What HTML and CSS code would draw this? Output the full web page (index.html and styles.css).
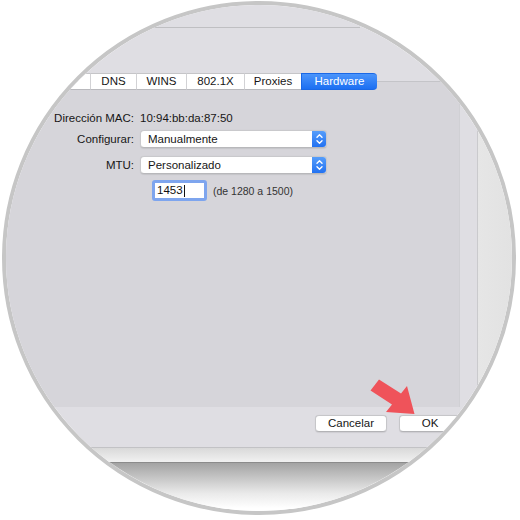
FILE: index.html
```html
<!DOCTYPE html>
<html lang="es">
<head>
<meta charset="utf-8">
<title>Hardware</title>
<link rel="stylesheet" href="styles.css">
</head>
<body>
<div class="lens">
  <div class="desk">
    <div class="window">
      <div class="toolbar"></div>
      <div class="panel">
        <div class="tabs">
          <span class="tab tab-tcp">TCP/IP</span>
          <span class="tab tab-dns">DNS</span>
          <span class="tab tab-wins">WINS</span>
          <span class="tab tab-8021x">802.1X</span>
          <span class="tab tab-proxies">Proxies</span>
          <span class="tab tab-hardware is-active">Hardware</span>
        </div>
        <div class="form">
          <div class="row row-mac">
            <span class="label">Dirección MAC:</span>
            <span class="value">10:94:bb:da:87:50</span>
          </div>
          <div class="row row-config">
            <span class="label">Configurar:</span>
            <div class="popup">
              <span class="popup-text">Manualmente</span>
              <span class="stepper"><svg viewBox="0 0 15 18" width="15" height="18"><path d="M5 7.2 L7.5 4.8 L10 7.2 M5 10.8 L7.5 13.2 L10 10.8" fill="none" stroke="#fff" stroke-width="1.4" stroke-linecap="round" stroke-linejoin="round"/></svg></span>
            </div>
          </div>
          <div class="row row-mtu">
            <span class="label">MTU:</span>
            <div class="popup">
              <span class="popup-text">Personalizado</span>
              <span class="stepper"><svg viewBox="0 0 15 18" width="15" height="18"><path d="M5 7.2 L7.5 4.8 L10 7.2 M5 10.8 L7.5 13.2 L10 10.8" fill="none" stroke="#fff" stroke-width="1.4" stroke-linecap="round" stroke-linejoin="round"/></svg></span>
            </div>
          </div>
          <div class="row row-custom">
            <span class="label"></span>
            <div class="field">
              <div class="input">1453<span class="caret"></span></div>
              <span class="hint">(de 1280 a 1500)</span>
            </div>
          </div>
        </div>
      </div>
      <div class="footer">
        <button class="btn btn-cancel">Cancelar</button>
        <button class="btn btn-ok">OK</button>
      </div>
    </div>
    <div class="desk-side"></div>
  </div>
  <div class="shelf"></div>
  <div class="floor"></div>
  <svg class="arrow" viewBox="0 0 520 520" width="520" height="520">
    <polygon points="379,379.5 401,393.5 407,386 414.5,414 386,412 392,404.5 370.5,390.5" fill="#ef535a"/>
  </svg>
</div>
</body>
</html>
```
FILE: styles.css
```css
* { box-sizing: border-box; }
html, body { margin: 0; padding: 0; background: #ffffff; }
body {
  width: 520px;
  height: 520px;
  overflow: hidden;
  font-family: "Liberation Sans", Arial, sans-serif;
  font-size: 11.5px;
  color: #161616;
}

.lens {
  position: relative;
  width: 514px;
  height: 514px;
  margin: 1px 0 0 2px;
  border: 4px solid #c6c6c6;
  border-radius: 50%;
  overflow: hidden;
  background: #ffffff;
  display: flex;
  flex-direction: column;
}

.desk {
  display: flex;
  flex: none;
  height: 443px;
}

.window {
  flex: none;
  width: 472px;
  height: 443px;
  background: #dfdee3;
  border-right: 1px solid #cacacd;
  border-bottom: 1px solid #c2c2c5;
  display: flex;
  flex-direction: column;
}

.desk-side {
  flex: 1;
  background: linear-gradient(90deg, #e6e6e6, #e2e2e2);
}

.toolbar {
  flex: none;
  width: 354px;
  height: 23px;
  border-bottom: 1px solid #bfbfc2;
}

.panel {
  flex: none;
  margin-top: 53px;
  width: 454px;
  height: 326px;
  background: #d6d5da;
  border-top: 1px solid #c4c4c8;
  border-right: 1px solid #d0d0d4;
}

.tabs {
  display: flex;
  justify-content: flex-end;
  margin-top: -9px;
  padding-right: 82px;
  height: 17px;
}

.tab {
  height: 17px;
  line-height: 15px;
  text-align: center;
  background: #ffffff;
  border-top: 1px solid #c5c5c8;
  border-bottom: 1px solid #b9b9bd;
  border-left: 1px solid #d2d2d5;
  color: #161616;
  white-space: nowrap;
}
.tab-tcp { width: 60px; padding-right: 26px; text-align: right; border-left: 0; }
.tab-dns { width: 46px; }
.tab-wins { width: 50px; }
.tab-8021x { width: 58px; }
.tab-proxies { width: 57px; }
.tab-hardware { width: 76px; }
.tab.is-active {
  background: linear-gradient(#4b95fb, #1c6ff2);
  border-color: #1a68e6;
  color: #ffffff;
  border-radius: 0 4px 4px 0;
}

.form {
  display: flex;
  flex-direction: column;
  padding-top: 19px;
}

.row {
  display: grid;
  grid-template-columns: 128px auto;
  column-gap: 6px;
  align-items: center;
  height: 18px;
}
.row-config { margin-top: 3px; }
.row-mtu { margin-top: 8px; }
.row-custom { margin-top: 6px; height: 21px; }

.label { text-align: right; white-space: nowrap; }
.value { white-space: nowrap; }

.popup {
  display: flex;
  align-items: center;
  width: 187px;
  height: 18px;
  background: #ffffff;
  border: 1px solid #c9c9cc;
  border-bottom-color: #b8b8bb;
  border-radius: 4px;
  box-shadow: 0 0.5px 1px rgba(0, 0, 0, 0.08);
  overflow: hidden;
}
.popup-text { flex: 1; padding-left: 7px; white-space: nowrap; }
.stepper {
  flex: none;
  width: 15px;
  height: 18px;
  margin: -1px -1px -1px 0;
  background: linear-gradient(#59a0fb, #1f6ff1);
  border-radius: 0 4px 4px 0;
  display: flex;
}

.field {
  display: flex;
  align-items: center;
  gap: 6px;
  padding-left: 12px;
}
.input {
  width: 55px;
  height: 21px;
  border: 3px solid #7ea5ee;
  border-radius: 3px;
  background: #ffffff;
  padding-left: 2px;
  line-height: 15px;
  font-size: 11.5px;
  display: flex;
  align-items: center;
  color: #111;
}
.caret {
  display: inline-block;
  width: 1px;
  height: 12px;
  background: #111;
  margin-left: 1px;
}
.hint {
  font-size: 10.5px;
  color: #333;
  white-space: nowrap;
}

.footer {
  flex: 1;
  display: flex;
  justify-content: flex-end;
  align-items: flex-start;
  gap: 12px;
  padding: 8px 16px 0 0;
}
.btn {
  height: 17px;
  padding: 0;
  font-family: inherit;
  font-size: 11.5px;
  line-height: 15px;
  color: #161616;
  background: #ffffff;
  border: 1px solid #c6c6c9;
  border-bottom-color: #b3b3b6;
  border-radius: 4px;
  box-shadow: 0 0.5px 1px rgba(0, 0, 0, 0.08);
}
.btn-cancel { width: 72px; }
.btn-ok { width: 62px; }

.shelf {
  flex: none;
  height: 15px;
  background: linear-gradient(#d9d9d9, #f1f1f1);
  border-bottom: 1px solid #8b8b8b;
}
.floor {
  flex: 1;
  background: linear-gradient(#a3a3a3, #e9e9e9 30px, #ffffff 45px);
}

.arrow {
  position: absolute;
  left: -6px;
  top: -5px;
  pointer-events: none;
}
```
